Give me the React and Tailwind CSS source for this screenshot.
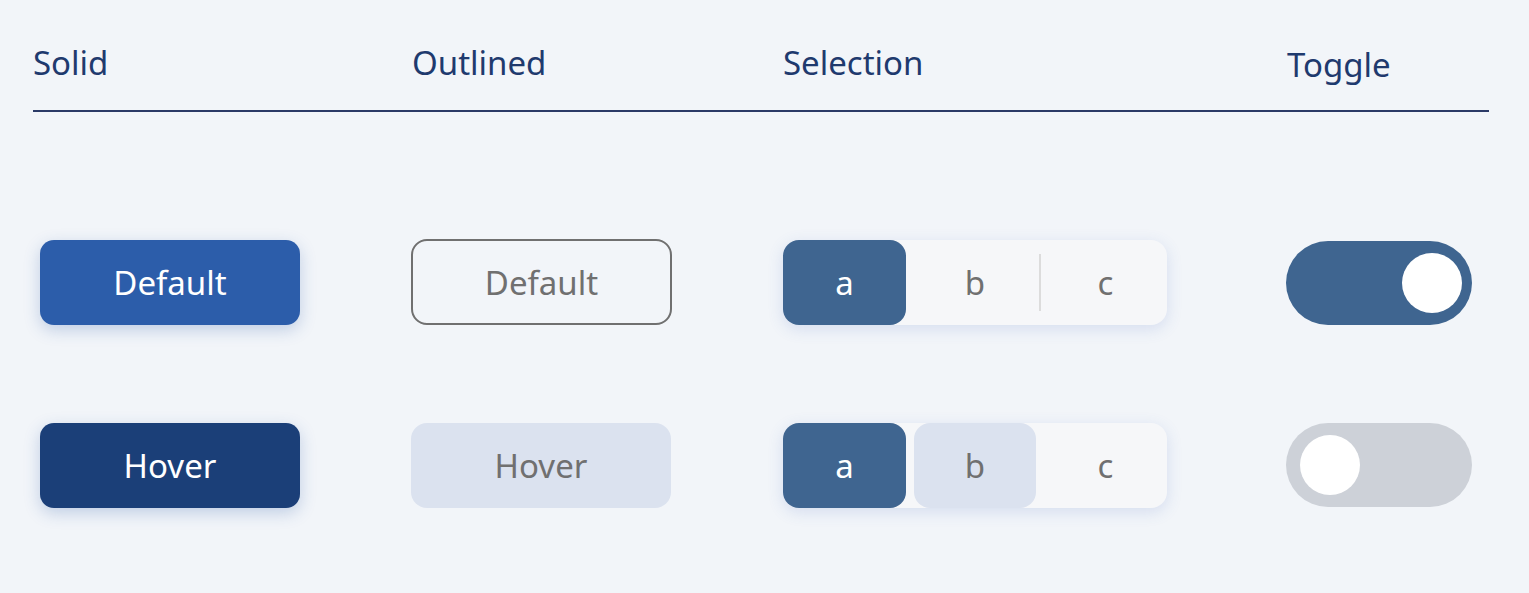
const HEADERS = [
  { label: "Solid", cls: "" },
  { label: "Outlined", cls: "" },
  { label: "Selection", cls: "" },
  { label: "Toggle", cls: "mt-[2px]" },
];

function Segmented({ hovered, divider }) {
  return (
    <div className="flex w-[384px] h-[85px] gap-2 rounded-[16px] bg-[#f6f7f9] shadow-[0_4px_16px_rgba(60,100,190,0.16)]">
      <div className="w-[123px] rounded-[16px] bg-[#3f6590] flex items-center justify-center text-white">a</div>
      <div
        className={`w-[122px] rounded-[16px] flex items-center justify-center text-[#707070] ${
          hovered ? "bg-[#dbe2ef]" : ""
        }`}
      >
        b
      </div>
      <div className="relative w-[123px] flex items-center justify-center text-[#707070]">
        {divider && <span className="absolute -left-[5px] top-[14px] h-[57px] w-[2px] bg-[#dcdcdc]" />}
        c
      </div>
    </div>
  );
}

function Toggle({ on }) {
  return (
    <div
      className={`flex w-[186px] h-[84px] rounded-full items-center ${
        on ? "bg-[#3f6590] justify-end pr-[10px]" : "bg-[#cdd1d8] justify-start pl-[14px]"
      }`}
    >
      <span className="w-[60px] h-[60px] rounded-full bg-white" />
    </div>
  );
}

export default function App() {
  return (
    <div
      className="min-h-[593px] bg-[#f2f5f9] px-[33px] pt-[46px] text-[33px]"
      style={{ fontFamily: '"Noto Sans", "Open Sans", sans-serif' }}
    >
      <div className="grid grid-cols-[379px_371px_504px_1fr] leading-none text-[#1f3a6e]">
        {HEADERS.map((h) => (
          <div key={h.label} className={h.cls}>
            {h.label}
          </div>
        ))}
      </div>
      <div className="mt-[29px] h-[2px] w-[1456px] bg-[#2b3a67]" />

      <div className="mt-[128px] grid grid-cols-[378px_372px_503px_1fr] gap-y-[98px] leading-none">
        <div className="pl-[7px]">
          <button className="w-[260px] h-[85px] rounded-[14px] bg-[#2c5daa] text-white shadow-[0_5px_16px_rgba(44,93,170,0.25)]">
            Default
          </button>
        </div>
        <div>
          <button className="w-[261px] h-[86px] -mt-[1px] rounded-[16px] border-2 border-[#707070] text-[#707070]">
            Default
          </button>
        </div>
        <div>
          <Segmented divider />
        </div>
        <div className="mt-[1px]">
          <Toggle on />
        </div>

        <div className="pl-[7px]">
          <button className="w-[260px] h-[85px] rounded-[14px] bg-[#1b3f78] text-white shadow-[0_5px_16px_rgba(44,93,170,0.25)]">
            Hover
          </button>
        </div>
        <div>
          <button className="w-[260px] h-[85px] rounded-[16px] bg-[#dbe2ef] text-[#707070]">Hover</button>
        </div>
        <div>
          <Segmented hovered />
        </div>
        <div>
          <Toggle />
        </div>
      </div>
    </div>
  );
}
